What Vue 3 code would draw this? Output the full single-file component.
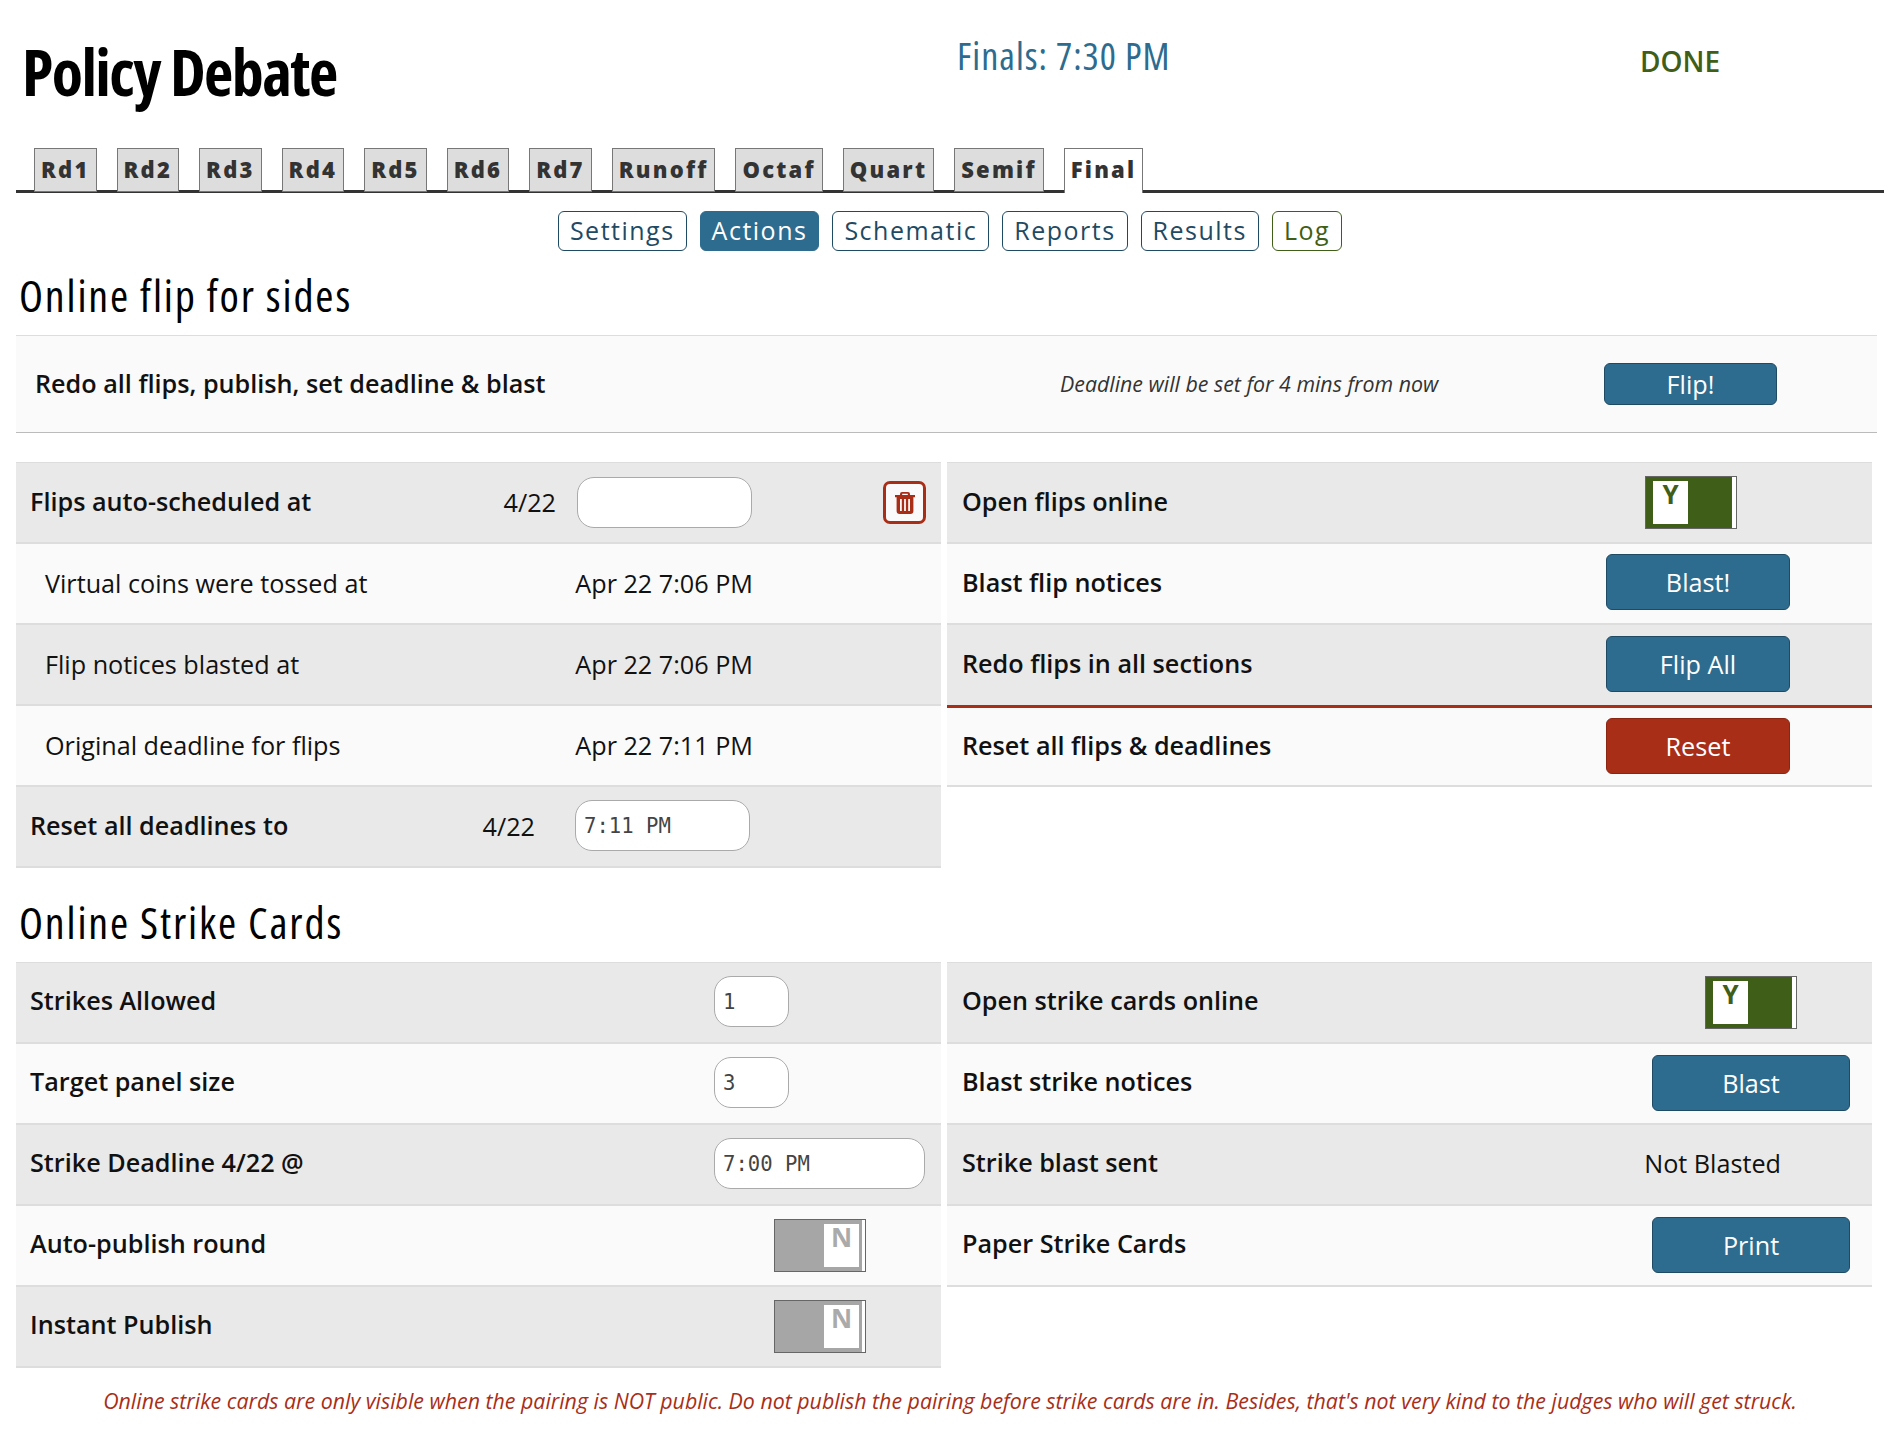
<template>
  <div class="page">
    <header class="top">
      <h1>Policy Debate</h1>
      <div class="start">Finals: 7:30 PM</div>
      <div class="done">DONE</div>
    </header>

    <ul class="tabs">
      <li v-for="t in tabs" :key="t" :class="{ on: t === 'Final' }">{{ t }}</li>
    </ul>

    <nav class="pills">
      <a v-for="p in pills" :key="p" :class="{ on: p === 'Actions', log: p === 'Log' }">{{ p }}</a>
    </nav>

    <h2 class="first">Online flip for sides</h2>

    <div class="flip">
      <span class="lbl">Redo all flips, publish, set deadline &amp; blast</span>
      <em>Deadline will be set for 4 mins from now</em>
      <button class="btn small">Flip!</button>
    </div>

    <div class="cols flips">
      <div class="tbl">
        <div class="row">
          <span class="lbl">Flips auto-scheduled at</span>
          <span>4/22</span>
          <input class="time w175 ml21" type="text">
          <button class="trash">
            <svg width="20" height="22" viewBox="0 0 20 22">
              <path d="M7 0h6a2 2 0 0 1 2 2v1h5v2.2h-1.6V19a3 3 0 0 1-3 3H4.600a3 3 0 0 1-3-3V5.200H0V3h5V2a2 2 0 0 1 2-2zm.2 1.800V3h5.600V1.800zM5 7v12h1.800V7zm4.100 0v12h1.800V7zM13.200 7v12H15V7z" fill="#a92e17" fill-rule="evenodd"/>
            </svg>
          </button>
        </div>
        <div class="row val"><span class="lbl in">Virtual coins were tossed at</span><span>Apr 22 7:06 PM</span></div>
        <div class="row val"><span class="lbl in">Flip notices blasted at</span><span>Apr 22 7:06 PM</span></div>
        <div class="row val"><span class="lbl in">Original deadline for flips</span><span>Apr 22 7:11 PM</span></div>
        <div class="row pr191">
          <span class="lbl">Reset all deadlines to</span>
          <span>4/22</span>
          <input class="time w175 ml40 up" type="text" value="7:11 PM">
        </div>
      </div>
      <div class="tbl">
        <div class="row pr135">
          <span class="lbl">Open flips online</span>
          <div class="toggle"><span class="knob">Y</span></div>
        </div>
        <div class="row pr82"><span class="lbl">Blast flip notices</span><button class="btn mid">Blast!</button></div>
        <div class="row pr82 redline"><span class="lbl">Redo flips in all sections</span><button class="btn mid">Flip All</button></div>
        <div class="row pr82 afterred"><span class="lbl">Reset all flips &amp; deadlines</span><button class="btn mid red">Reset</button></div>
      </div>
    </div>

    <h2 class="second">Online Strike Cards</h2>

    <div class="cols strikes">
      <div class="tbl">
        <div class="row pr152"><span class="lbl">Strikes Allowed</span><input class="time w75 up" type="text" value="1"></div>
        <div class="row pr152"><span class="lbl">Target panel size</span><input class="time w75 up" type="text" value="3"></div>
        <div class="row pr16"><span class="lbl">Strike Deadline 4/22 @</span><input class="time w211 up" type="text" value="7:00 PM"></div>
        <div class="row pr75"><span class="lbl">Auto-publish round</span><div class="toggle off"><span class="knob">N</span></div></div>
        <div class="row pr75"><span class="lbl">Instant Publish</span><div class="toggle off"><span class="knob">N</span></div></div>
      </div>
      <div class="tbl">
        <div class="row pr75"><span class="lbl">Open strike cards online</span><div class="toggle"><span class="knob">Y</span></div></div>
        <div class="row pr22"><span class="lbl">Blast strike notices</span><button class="btn wide">Blast</button></div>
        <div class="row pr91"><span class="lbl">Strike blast sent</span><span>Not Blasted</span></div>
        <div class="row pr22"><span class="lbl">Paper Strike Cards</span><button class="btn wide">Print</button></div>
      </div>
    </div>

    <p class="note">Online strike cards are only visible when the pairing is NOT public. Do not publish the pairing before strike cards are in. Besides, that's not very kind to the judges who will get struck.</p>
  </div>
</template>

<script setup>
const tabs = ['Rd1', 'Rd2', 'Rd3', 'Rd4', 'Rd5', 'Rd6', 'Rd7', 'Runoff', 'Octaf', 'Quart', 'Semif', 'Final']
const pills = ['Settings', 'Actions', 'Schematic', 'Reports', 'Results', 'Log']
</script>

<style>
body {
  background: #fff;
}
</style>

<style scoped>
.page {
  box-sizing: border-box;
  width: 1902px;
  height: 1456px;
  padding: 0 18px 0 16px;
  font-family: "Open Sans", "Liberation Sans", sans-serif;
  font-size: 25.2px;
  color: #111;
}

.top {
  display: grid;
  grid-template-columns: 941px 683px 1fr;
  height: 148px;
}

h1 {
  margin: 32px 0 0 6px;
  font-size: 64px;
  line-height: 80px;
  font-weight: 700;
  font-stretch: 75%;
  letter-spacing: -1.6px;
  color: #000;
}

.start {
  margin-top: 31px;
  font-size: 38px;
  line-height: 48px;
  font-stretch: 75%;
  letter-spacing: 1px;
  color: #2e6c8f;
}

.done {
  margin-top: 41px;
  font-size: 28px;
  line-height: 40px;
  font-weight: 600;
  color: #3f5e17;
}

.tabs {
  display: flex;
  gap: 20px;
  list-style: none;
  margin: 0;
  padding: 0 0 0 18px;
  height: 42px;
  border-bottom: 3px solid #333;
}

.tabs li {
  box-sizing: border-box;
  height: 44px;
  padding: 0 6px;
  background: #ddd;
  border: 1px solid #777;
  font-size: 22px;
  line-height: 40px;
  font-weight: 800;
  letter-spacing: 2.200px;
  color: #333;
}

.tabs li.on {
  height: 45px;
  background: #fff;
  border-bottom: 0;
}

.pills {
  display: flex;
  justify-content: center;
  gap: 13px;
  margin: 18px 0 0;
}

.pills a {
  box-sizing: border-box;
  height: 40px;
  padding: 0 11px;
  border: 1px solid #1f4a63;
  border-radius: 6px;
  font-size: 25px;
  line-height: 37px;
  letter-spacing: 1.500px;
  color: #1f4a63;
}

.pills a.on {
  background: #2e6c8f;
  color: #fff;
  border-color: #2e6c8f;
}

.pills a.log {
  border-color: #3f5e17;
  color: #3f5e17;
}

h2 {
  box-sizing: border-box;
  margin: 0 0 0 3px;
  font-size: 44px;
  line-height: 60px;
  font-weight: 400;
  font-stretch: 75%;
  letter-spacing: 1.850px;
  color: #000;
}

h2.first {
  padding-top: 14px;
  height: 84px;
}

h2.second {
  padding-top: 25px;
  height: 95px;
}

.flip {
  box-sizing: border-box;
  display: flex;
  align-items: center;
  height: 98px;
  width: 1861px;
  padding-left: 19px;
  background: #fafafa;
  border-top: 1px solid #ddd;
  border-bottom: 1px solid #bbb;
}

.flip .lbl {
  width: 1025px;
  flex: none;
  margin-bottom: 2px;
}

.flip em {
  width: 544px;
  margin-bottom: 2px;
  font-size: 21.350px;
  color: #333;
}

.cols {
  display: grid;
  grid-template-columns: 925px 925px;
  gap: 6px;
}

.flips {
  margin-top: 29px;
  height: 405px;
}

.tbl {
  border-top: 1px solid #ddd;
  align-self: start;
}

.row {
  box-sizing: border-box;
  display: flex;
  align-items: center;
  height: 81px;
  padding: 0 15px;
  border-bottom: 2px solid #ddd;
  background: #fafafa;
}

.tbl:first-child .row {
  padding-left: 14px;
}

.row:nth-child(odd) {
  background: #e9e9e9;
}

.row > span {
  margin-bottom: 2px;
}

.row > .lbl {
  margin-bottom: 4px;
}

.strikes .row > span {
  margin-bottom: 4px;
}

.strikes .row > .lbl {
  margin-bottom: 6px;
}

.lbl {
  flex: 1;
  font-weight: 600;
}

.row > .lbl.in {
  font-weight: 400;
  padding-left: 15px;
  margin-bottom: 2px;
}

.row.val {
  padding-right: 188px;
}

.row.pr16 { padding-right: 16px; }
.row.pr22 { padding-right: 22px; }
.row.pr75 { padding-right: 75px; }
.row.pr82 { padding-right: 82px; }
.row.pr91 { padding-right: 91px; }
.row.pr135 { padding-right: 135px; }
.row.pr152 { padding-right: 152px; }
.row.pr191 { padding-right: 191px; }

.row.redline {
  height: 83px;
  border-bottom: 3px solid #a92e17;
}

.row.afterred {
  height: 79px;
}

.time {
  box-sizing: border-box;
  height: 51px;
  padding: 0 8px;
  background: #fff;
  border: 1px solid #aaa;
  border-radius: 17px;
  font-family: "DejaVu Sans Mono", monospace;
  font-size: 20.600px;
  color: #444;
  outline: none;
}

.up { margin-bottom: 2px; }
.w75 { width: 75px; }
.w175 { width: 175px; }
.w211 { width: 211px; }
.ml21 { margin-left: 21px; }
.ml40 { margin-left: 40px; }

.trash {
  box-sizing: border-box;
  display: flex;
  align-items: center;
  justify-content: center;
  width: 43px;
  height: 43px;
  margin-left: 131px;
  padding: 0;
  background: #fafafa;
  border: 3px solid #a92e17;
  border-radius: 7px;
}

.btn {
  box-sizing: border-box;
  padding: 0;
  background: #2e6c8f;
  border: 1px solid #1f4a63;
  border-radius: 6px;
  font-family: inherit;
  font-size: 25.2px;
  color: #fff;
}

.btn.small {
  width: 173px;
  height: 42px;
}

.btn.mid {
  width: 184px;
  height: 56px;
  margin-bottom: 3px;
}

.btn.wide {
  width: 198px;
  height: 56px;
  margin-bottom: 2px;
}

.btn.red {
  margin-bottom: 2px;
  background: #a92e17;
  border-color: #8a2512;
}

.toggle {
  box-sizing: border-box;
  display: flex;
  width: 92px;
  height: 53px;
  padding: 4px 0 0 7px;
  background: #3f5e17;
  border: 1px solid #666;
  box-shadow: inset -4px 0 0 #fff;
}

.knob {
  width: 35px;
  height: 43px;
  background: #fff;
  font-size: 26px;
  line-height: 27px;
  font-weight: 700;
  text-align: center;
  color: #3f5e17;
}

.toggle.off {
  padding-left: 49px;
  background: #a6a6a6;
  box-shadow: inset -3px 0 0 #fff;
}

.off .knob {
  color: #aaa;
}

.note {
  margin: 17px 0 0;
  text-align: center;
  font-size: 21.350px;
  line-height: 32px;
  font-style: italic;
  color: #a92e17;
}
</style>
